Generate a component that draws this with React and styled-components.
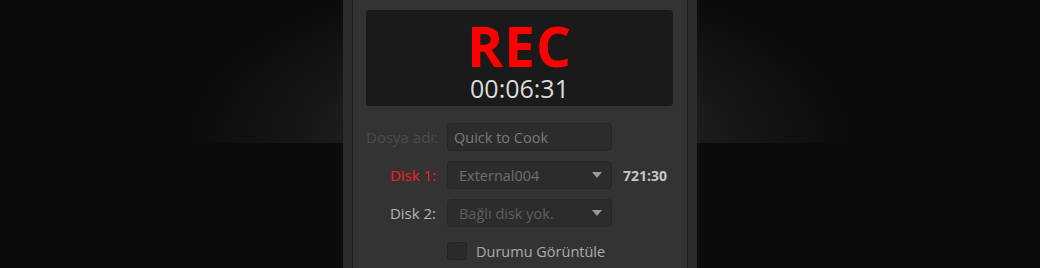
import React from 'react'
import styled, { createGlobalStyle } from 'styled-components'

const GlobalStyle = createGlobalStyle`
    html, body {
        margin: 0;
        padding: 0;
        background: #0b0b0b;
    }
    body {
        font-family: 'Open Sans', 'Noto Sans', sans-serif;
    }
`

const Page = styled.div`
    width: 1040px;
    height: 268px;
    overflow: hidden;
    display: flex;
    justify-content: center;
    background-color: #0b0b0b;
    background-image: radial-gradient(ellipse 335px 170px at 50% 100%, #2c2c2c 0%, #242424 35%, #151515 70%, #0b0b0b 100%);
    background-size: 100% 143px;
    background-repeat: no-repeat;
`

const Frame = styled.div`
    width: 354px;
    height: 268px;
    box-sizing: border-box;
    padding: 0 9px;
    background: #2c2c2c;
`

const Window = styled.div`
    height: 100%;
    box-sizing: border-box;
    padding: 10px 14px 0 13px;
    background: #333333;
    border-left: 1px solid #1f1f1f;
    border-right: 1px solid #1f1f1f;
`

const RecDisplay = styled.div`
    height: 96px;
    box-sizing: border-box;
    background: #1a1a1a;
    border-radius: 4px;
    display: flex;
    flex-direction: column;
    align-items: center;
    padding-top: 10px;
`

const RecLabel = styled.div`
    font-size: 55px;
    font-weight: 700;
    line-height: 52px;
    letter-spacing: 1px;
    color: #ff0000;
`

const Timecode = styled.div`
    margin-top: 3px;
    font-size: 25px;
    line-height: 26px;
    color: #dcdcdc;
`

const Form = styled.div`
    margin-top: 17px;
    display: grid;
    grid-template-columns: 70px 165px auto;
    grid-auto-rows: 28px;
    column-gap: 11px;
    row-gap: 10px;
    align-items: center;
`

const Label = styled.div`
    font-size: 15px;
    text-align: right;
    white-space: nowrap;
    color: ${p => p.tone === 'disabled' ? '#4b4b4b' : p.tone === 'alert' ? '#ff1a1a' : '#b3b3b3'};
`

const Field = styled.div`
    height: 28px;
    box-sizing: border-box;
    background: #2c2c2c;
    border: 1px solid #272727;
    border-radius: 4px;
    display: flex;
    align-items: center;
    justify-content: space-between;
    padding: ${p => p.select ? '0 9px 0 11px' : '0 6px'};
    font-size: 14.5px;
    color: ${p => p.muted ? '#5f5f5f' : p.select ? '#6f6f6f' : '#7a7a7a'};
`

const Caret = styled.span`
    width: 0;
    height: 0;
    border-left: 5px solid transparent;
    border-right: 5px solid transparent;
    border-top: 6px solid #9a9a9a;
`

const Remaining = styled.div`
    font-size: 14px;
    font-weight: 700;
    color: #c6c6c6;
`

const CheckRow = styled.label`
    grid-column: 2 / 4;
    display: flex;
    align-items: center;
    gap: 9px;
    font-size: 14.5px;
    color: #acacac;
`

const Box = styled.span`
    width: 20px;
    height: 18px;
    box-sizing: border-box;
    background: #2a2a2a;
    border: 1px solid #242424;
    border-radius: 3px;
`

export default function App() {
    return (
        <Page>
            <GlobalStyle />
            <Frame>
                <Window>
                    <RecDisplay>
                        <RecLabel>REC</RecLabel>
                        <Timecode>00:06:31</Timecode>
                    </RecDisplay>
                    <Form>
                        <Label tone="disabled">Dosya adı:</Label>
                        <Field>Quick to Cook</Field>
                        <span />

                        <Label tone="alert">Disk 1:</Label>
                        <Field select>
                            External004
                            <Caret />
                        </Field>
                        <Remaining>721:30</Remaining>

                        <Label>Disk 2:</Label>
                        <Field select muted>
                            Bağlı disk yok.
                            <Caret />
                        </Field>
                        <span />

                        <span />
                        <CheckRow>
                            <Box />
                            Durumu Görüntüle
                        </CheckRow>
                    </Form>
                </Window>
            </Frame>
        </Page>
    )
}
